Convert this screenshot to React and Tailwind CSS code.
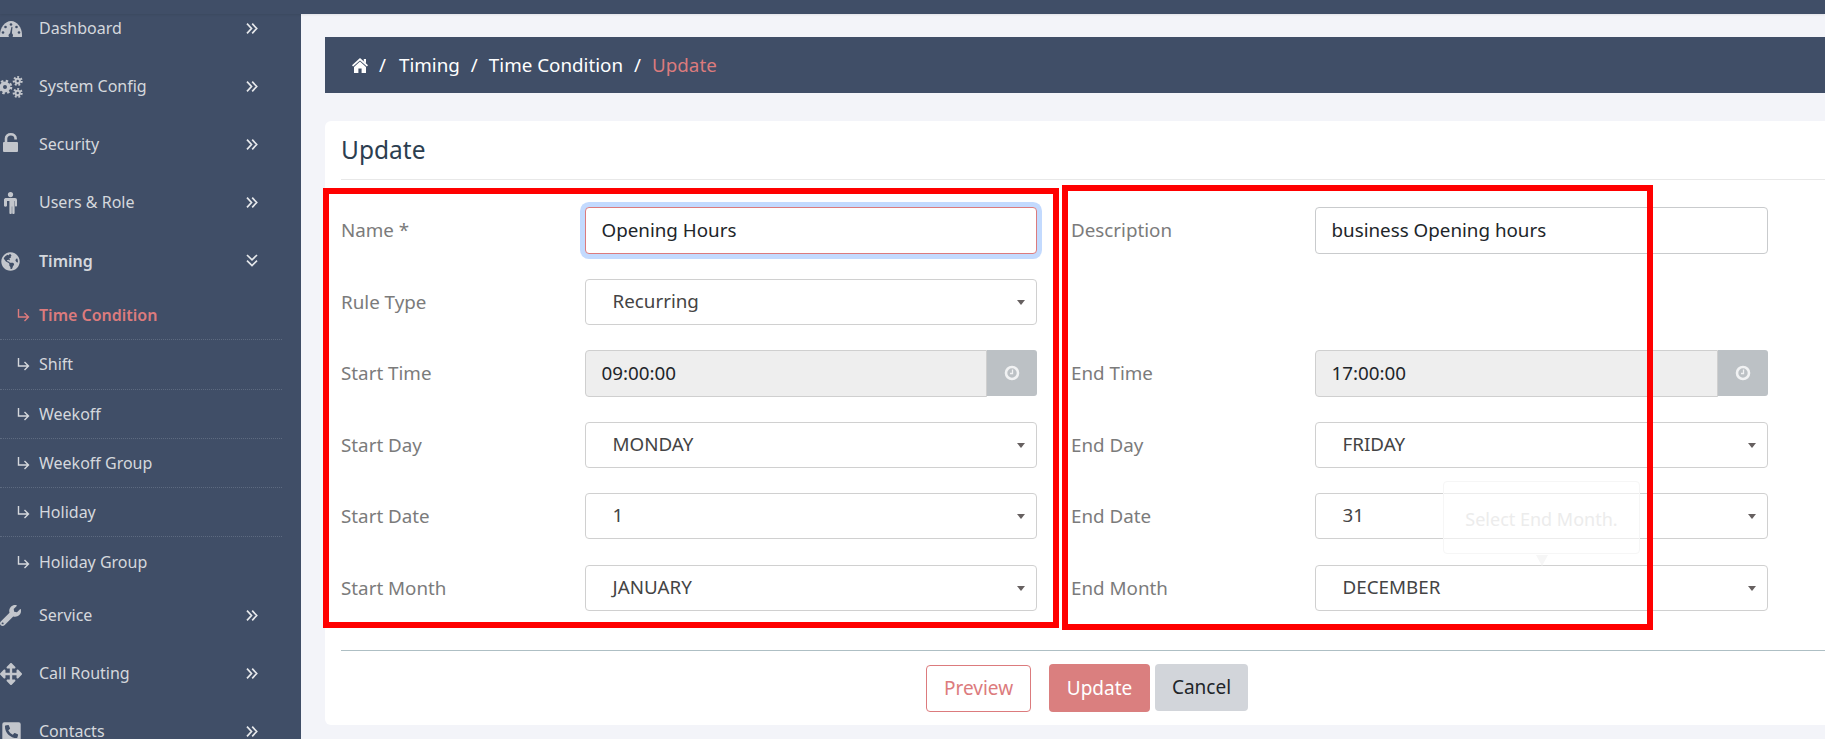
import React from "react";
import { FaGlobeAmericas, FaWrench, FaArrowsAlt, FaPhoneSquareAlt } from "react-icons/fa";

const IC = "#c3c6cc";
const BG = "#404e67";

const GaugeIcon = () => (
  <svg width="22" height="18" viewBox="0 0 22 18">
    <path d="M0 17c0-.6 0-1.500 0-2.500C0 7.500 5 1 11 1s11 6.500 11 13.500c0 1 0 1.900-.1 2.500Z" fill={IC} />
    <g fill={BG}>
      <circle cx="11" cy="4.500" r="1.300" />
      <circle cx="5.500" cy="7" r="1.300" />
      <circle cx="16.500" cy="7" r="1.300" />
      <circle cx="3" cy="12.500" r="1.300" />
      <circle cx="19" cy="12.500" r="1.300" />
      <path d="M8.500 15.500a2.500 2.500 0 0 1 1.500-2.300l1.500-6.500 1 .2-.6 6.400a2.500 2.500 0 0 1 1.100 2.200c0 1-.5 1.500-1 1.500h-2.500c-.6 0-1-.6-1-1.500Z" />
    </g>
  </svg>
);

const Gear = ({ cx, cy, r, w, t, tw }) => {
  const R = r + w / 2 + 0.7;
  const c = 2 * Math.PI * R;
  return (
    <g fill="none" stroke={IC}>
      <circle cx={cx} cy={cy} r={r} strokeWidth={w} />
      <circle cx={cx} cy={cy} r={R} strokeWidth={tw} strokeDasharray={`${c / t / 2} ${c / t / 2}`} />
    </g>
  );
};

const CogsIcon = () => (
  <svg width="23" height="23" viewBox="0 0 23 23" className="mb-[2px]">
    <Gear cx={5} cy={12} r={3.7} w={3.4} t={8} tw={2.4} />
    <Gear cx={17.7} cy={6} r={2.2} w={2} t={7} tw={2.2} />
    <Gear cx={17.7} cy={18} r={2.2} w={2} t={7} tw={2.2} />
  </svg>
);

const LockIcon = () => (
  <svg width="15" height="19" viewBox="0 0 15 19" className="mb-[5px] ml-[3px]">
    <rect x="0" y="9" width="15" height="10" rx="1" fill={IC} />
    <path d="M3 9.500V5.500C3 3 5 1.300 7.800 1.300S12.600 3 12.600 5.500V6.500" fill="none" stroke={IC} strokeWidth="2.600" />
  </svg>
);

const MaleIcon = () => (
  <svg width="13" height="22" viewBox="0 0 13 22" className="ml-[4px]">
    <circle cx="6.500" cy="2.600" r="2.600" fill={IC} />
    <path d="M2 6h9a2 2 0 0 1 2 2v5.500c0 .6-.4 1-1 1s-1-.4-1-1V9h-.4v12c0 .6-.5 1-1.200 1s-1.200-.4-1.200-1v-6.500h-.4V21c0 .6-.5 1-1.200 1s-1.200-.4-1.200-1V9H3v4.500c0 .6-.4 1-1 1s-1-.4-1-1V8A2 2 0 0 1 2 6Z" fill={IC} />
    <path d="M0 8.500a2 2 0 0 1 2-2.500v8.500H1c-.6 0-1-.4-1-1Z" fill={IC} />
  </svg>
);

const HomeIcon = () => (
  <svg width="16" height="15" viewBox="0 0 16 15" className="mr-[1px] shrink-0" fill="#ffffff">
    <path d="M8 0 16 7.300 14.900 8.500 8 2.400 1.100 8.500 0 7.300ZM11.800 1H14V5.300L11.800 3.300Z" />
    <path d="M8 3.600 14 9V15H9.600V10.500H6.400V15H2V9Z" />
  </svg>
);

const ClockIcon = () => (
  <svg width="16" height="16" viewBox="0 0 16 16" fill="none" stroke="#f1f2f3">
    <circle cx="8" cy="8" r="6" strokeWidth="2.600" />
    <path d="M8.500 4.500V8.500H6" strokeWidth="1.300" />
  </svg>
);

const DoubleRight = () => (
  <svg width="12" height="11" viewBox="0 0 12 11" fill="none" stroke="#e6e8eb" strokeWidth="1.700">
    <path d="M1 .7 5.500 5.500 1 10.300M6.200 .7 10.700 5.500 6.200 10.300" />
  </svg>
);
const DoubleDown = () => (
  <svg width="12" height="13" viewBox="0 0 12 13" fill="none" stroke="#e6e8eb" strokeWidth="1.700">
    <path d="M1 1 6 5.800 11 1M1 6.700 6 11.500 11 6.700" />
  </svg>
);

const Sub = ({ children, active, last }) => (
  <div className={"flex h-[49.3px] w-[282px] items-center pl-[17px] " + (last ? "" : "border-b border-dotted border-b-[#5d6a80]")}>
    <svg width="13" height="14" viewBox="0 0 13 14" fill="none" stroke={active ? "#dc7b7d" : "#d5d8dd"} strokeWidth="1.400" className="mr-[9px] shrink-0">
      <path d="M1.500 1v8h10M7.500 5l4 4-4 4" />
    </svg>
    <span className={active ? "text-[16px] font-semibold text-[#dc7b7d]" : "text-[16px] text-[#d5d8dd]"}>{children}</span>
  </div>
);

const Main = ({ icon, children, open, bold }) => (
  <div className="relative flex h-[58px] items-center">
    <div className="flex w-[39px] shrink-0 items-center text-[#c3c6cc]">{icon}</div>
    <span className={"text-[16px] text-[#d5d8dd] " + (bold ? "font-semibold" : "pb-[2px]")}>{children}</span>
    <div className={"absolute left-[246px] " + (open ? "top-[22px]" : "top-[23px]")}>
      {open ? <DoubleDown /> : <DoubleRight />}
    </div>
  </div>
);

const Label = ({ children }) => <div className="w-[243.500px] shrink-0 self-center text-[18.800px] text-[#7b7b7b]">{children}</div>;

const TextField = ({ value, focus }) => (
  <div className={"flex h-[47px] w-full items-center rounded-[4px] border bg-white pl-[16px] text-[18.800px] text-[#212529] " + (focus ? "border-[#dc7b7d] ring-[5px] ring-[#c3dafe]" : "border-[#c9cbcd]")}>
    {value}
  </div>
);

const SelectField = ({ value }) => (
  <div className="relative flex h-[46px] w-full items-center rounded-[4px] border border-[#d0d0d0] bg-white pb-[1px] pl-[27px] text-[18.800px] text-[#444444]">
    {value}
    <span className="absolute right-[11px] top-[20px] h-0 w-0 border-x-[4.500px] border-t-[5.500px] border-x-transparent border-t-[#666060]" />
  </div>
);

const TimeField = ({ value }) => (
  <div className="flex h-[47px] w-full">
    <div className="flex flex-1 items-center rounded-l-[4px] border border-[#cfcfcf] bg-[#eeeeee] pl-[16px] text-[18.800px] text-[#212529]">{value}</div>
    <div className="flex h-[46px] w-[50px] items-center justify-center rounded-r-[3px] bg-[#bcc1c5]">
      <ClockIcon />
    </div>
  </div>
);

const Row = ({ l, lf, r, rf }) => (
  <div className="mb-[24.500px] flex h-[47px] items-start">
    <Label>{l}</Label>
    <div className="w-[452.500px] shrink-0">{lf}</div>
    <div className="w-[34px] shrink-0" />
    <Label>{r}</Label>
    <div className="w-[453px] shrink-0">{rf}</div>
  </div>
);

export default function App() {
  return (
    <div className="relative h-[739px] w-[1825px] overflow-hidden bg-[#f3f4f9]" style={{ fontFamily: '"Noto Sans", "Open Sans", sans-serif' }}>
      <div className="relative z-10 h-[14px] bg-[#404e67] shadow-[0_1px_2px_rgba(0,0,0,0.08)]" />
      <div className="flex h-[725px]">
        <aside className="h-full w-[301px] shrink-0 overflow-hidden bg-[#404e67]">
          <div className="-mt-[14px]">
            <Main icon={<GaugeIcon />}>Dashboard</Main>
            <Main icon={<CogsIcon />}>System Config</Main>
            <Main icon={<LockIcon />}>Security</Main>
            <Main icon={<MaleIcon />}>Users &amp; Role</Main>
            <Main icon={<FaGlobeAmericas size={19} className="ml-[1px]" />} open bold>Timing</Main>
            <div className="h-[296.500px] pt-[1px]">
              <Sub active>Time Condition</Sub>
              <Sub>Shift</Sub>
              <Sub>Weekoff</Sub>
              <Sub>Weekoff Group</Sub>
              <Sub>Holiday</Sub>
              <Sub last>Holiday Group</Sub>
            </div>
            <Main icon={<FaWrench size={21} />}>Service</Main>
            <Main icon={<FaArrowsAlt size={22} />}>Call Routing</Main>
            <Main icon={<FaPhoneSquareAlt size={21} className="ml-[1px]" />}>Contacts</Main>
          </div>
        </aside>
        <main className="min-w-0 flex-1 overflow-hidden pl-[24px] pt-[23px]">
          <div className="flex h-[56px] w-[1560px] items-center gap-[11px] bg-[#404e67] pl-[27px] text-[18.800px] text-white">
            <HomeIcon />
            <span className="-ml-[1px]">/</span>
            <span className="ml-[2px]">Timing</span>
            <span>/</span>
            <span>Time Condition</span>
            <span>/</span>
            <span className="text-[#dc7b7d]">Update</span>
          </div>
          <section className="mt-[28px] h-[604px] w-[1560px] rounded-[6px] bg-white pl-[16px]">
            <div className="flex h-[59px] items-center border-b border-[#e8e8e8] text-[24.500px] text-[#2c3e50]">Update</div>
            <div className="pt-[27px]">
              <Row l="Name *" lf={<TextField value="Opening Hours" focus />} r="Description" rf={<TextField value="business Opening hours" />} />
              <Row l="Rule Type" lf={<SelectField value="Recurring" />} />
              <Row l="Start Time" lf={<TimeField value="09:00:00" />} r="End Time" rf={<TimeField value="17:00:00" />} />
              <Row l="Start Day" lf={<SelectField value="MONDAY" />} r="End Day" rf={<SelectField value="FRIDAY" />} />
              <Row l="Start Date" lf={<SelectField value="1" />} r="End Date" rf={<SelectField value="31" />} />
              <Row l="Start Month" lf={<SelectField value="JANUARY" />} r="End Month" rf={<SelectField value="DECEMBER" />} />
            </div>
            <div className="mt-[38.500px] border-t border-[#aebfc4]" />
            <div className="flex pl-[585px] pt-[13px]">
              <button className="mt-[1px] h-[47px] w-[105px] rounded-[4px] border border-[#dc7b7d] bg-white text-[19px] text-[#dc7b7d]">Preview</button>
              <button className="ml-[18px] h-[48px] w-[101px] rounded-[4px] bg-[#da7f7f] text-[19px] text-white">Update</button>
              <button className="ml-[5px] h-[47px] w-[93px] rounded-[4px] bg-[#d2d5da] text-[19px] text-[#212529]">Cancel</button>
            </div>
          </section>
        </main>
      </div>

      <div className="absolute left-[1443px] top-[481px] flex h-[73px] w-[197px] items-center justify-center rounded-[4px] border border-[#f6f6f6] bg-white/60 pt-[3px] text-[18px] text-[#ececec]">
        Select End Month.
        <span className="absolute left-[92px] top-[73px] h-0 w-0 border-x-[6px] border-t-[11px] border-x-transparent border-t-[#f6f6f6]" />
      </div>
      <div className="absolute left-[323px] top-[188px] h-[440px] w-[736px] border-[6px] border-[#ff0000]" />
      <div className="absolute left-[1062px] top-[185px] h-[445px] w-[591px] border-[6px] border-[#ff0000]" />
    </div>
  );
}
